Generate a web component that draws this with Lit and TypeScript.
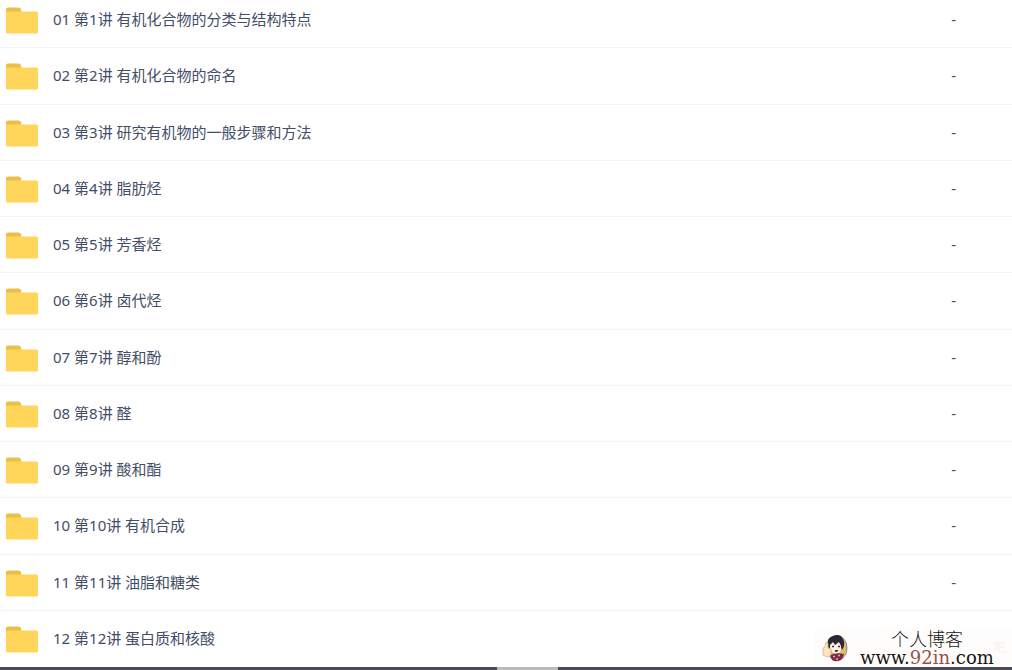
import { LitElement, html, css, svg, nothing } from "lit";
import { customElement } from "lit/decorators.js";

const lessons = [
  { name: "01 第1讲 有机化合物的分类与结构特点", size: "-" },
  { name: "02 第2讲 有机化合物的命名", size: "-" },
  { name: "03 第3讲 研究有机物的一般步骤和方法", size: "-" },
  { name: "04 第4讲 脂肪烃", size: "-" },
  { name: "05 第5讲 芳香烃", size: "-" },
  { name: "06 第6讲 卤代烃", size: "-" },
  { name: "07 第7讲 醇和酚", size: "-" },
  { name: "08 第8讲 醛", size: "-" },
  { name: "09 第9讲 酸和酯", size: "-" },
  { name: "10 第10讲 有机合成", size: "-" },
  { name: "11 第11讲 油脂和糖类", size: "-" },
  { name: "12 第12讲 蛋白质和核酸", size: "" },
];

const folder = svg`
  <path d="M0 12V2.5Q0 .5 2 .5H12.5Q14.5 .5 15 2.5L16 8V12Z" fill="#e9be49"/>
  <path d="M0 6Q0 4.5 1.5 4.5H30.5Q32 4.5 32 6V25Q32 26.5 30.5 26.5H1.5Q0 26.5 0 25Z" fill="#ffd55a"/>`;

@customElement("app-root")
export class AppRoot extends LitElement {
  static styles = css`
    :host {
      display: flex;
      flex-direction: column;
      min-height: 100vh;
      overflow: hidden;
      position: relative;
      background: #fff;
      color: #424e67;
      font: 15px/20px "Noto Sans", "Noto Sans CJK SC", sans-serif;
    }
    .list {
      flex: 1;
      display: grid;
      grid-auto-rows: 1fr;
      width: 100%;
      margin: -8px 0 0;
      padding: 0;
      list-style: none;
    }
    .row {
      display: flex;
      align-items: center;
      box-sizing: border-box;
      min-height: 56px;
      padding: 0 56px 1px 6px;
      border-bottom: 1px solid #f3f3fb;
    }
    .row:last-child {
      border-bottom-color: transparent;
    }
    .icon {
      width: 32px;
      height: 27px;
      margin: 3px 15px 0 0;
    }
    .name {
      flex: 1;
      color: inherit;
      text-decoration: none;
    }
    .track {
      display: grid;
      grid-template-columns: 497fr 61fr 454fr;
      height: 3px;
      background: #484b55;
    }
    .thumb {
      grid-column: 2;
      background: #bdbab8;
    }
    .mark {
      position: absolute;
      right: 0;
      bottom: 3px;
      box-sizing: border-box;
      display: flex;
      align-items: center;
      width: 198px;
      height: 38px;
      padding-left: 8px;
      background: #fefdfb;
      color: #181414;
    }
    .avatar {
      width: 26px;
      height: 28px;
      margin-right: 12px;
    }
    .words {
      display: flex;
      flex-direction: column;
      align-items: center;
    }
    .title {
      font-size: 18px;
      font-weight: 300;
      line-height: 20px;
    }
    .site {
      font: 18px/18px "DejaVu Serif", serif;
    }
    .red {
      color: #98504c;
    }
    .faint {
      color: #fcefec;
      font-size: 12px;
    }
  `;

  render() {
    return html`
      <ul class="list">
        ${lessons.map(
          ({ name, size }) => html`<li class="row">
            <svg class="icon" viewBox="0 0 32 27" aria-hidden="true">${folder}</svg>
            <a class="name" href="#">${name}</a>
            ${size ? html`<span>${size}</span>` : nothing}
          </li>`
        )}
      </ul>
      <div class="track"><div class="thumb"></div></div>
      <div class="mark">
        <svg class="avatar" viewBox="0 0 26 28" aria-hidden="true">
          <ellipse cx="15" cy="14" rx="10" ry="12.5" fill="#e2bd68" stroke="#8d8498"/>
          <path d="M6 12Q4 4 11 2Q18-1 21 5Q24 10 20 16L18 11L9 11L7 15Z" fill="#2c2734"/>
          <path d="M8 11L11 8L13 11L17 8L19 12Q20 19 14 20Q8 19 8 11Z" fill="#fff0e4"/>
          <path d="M10 12.5H12M16 12.5H18" stroke="#333" stroke-width="1.5"/>
          <path d="M12.5 16H16.5L15 18H13.5Z" fill="#493039"/>
          <path d="M8 21Q15 18 22 20L20 25Q15 29 10 26Z" fill="#7d2947"/>
          <path d="M11 22.5H13M16 21.5H18M14 25H16" stroke="#e7aaa3" stroke-width="1.5"/>
          <path d="M1 14L3 13L4 8L6 9V14L9 15V21L5 23L1 21Z" fill="#ffe4bd" stroke="#c7a98b" stroke-width=".7"/>
        </svg>
        <div class="words">
          <span class="title">个人博客</span>
          <span class="site">www.<span class="red">92in</span>.com</span>
        </div>
        <span class="faint">吧</span>
      </div>
    `;
  }
}
